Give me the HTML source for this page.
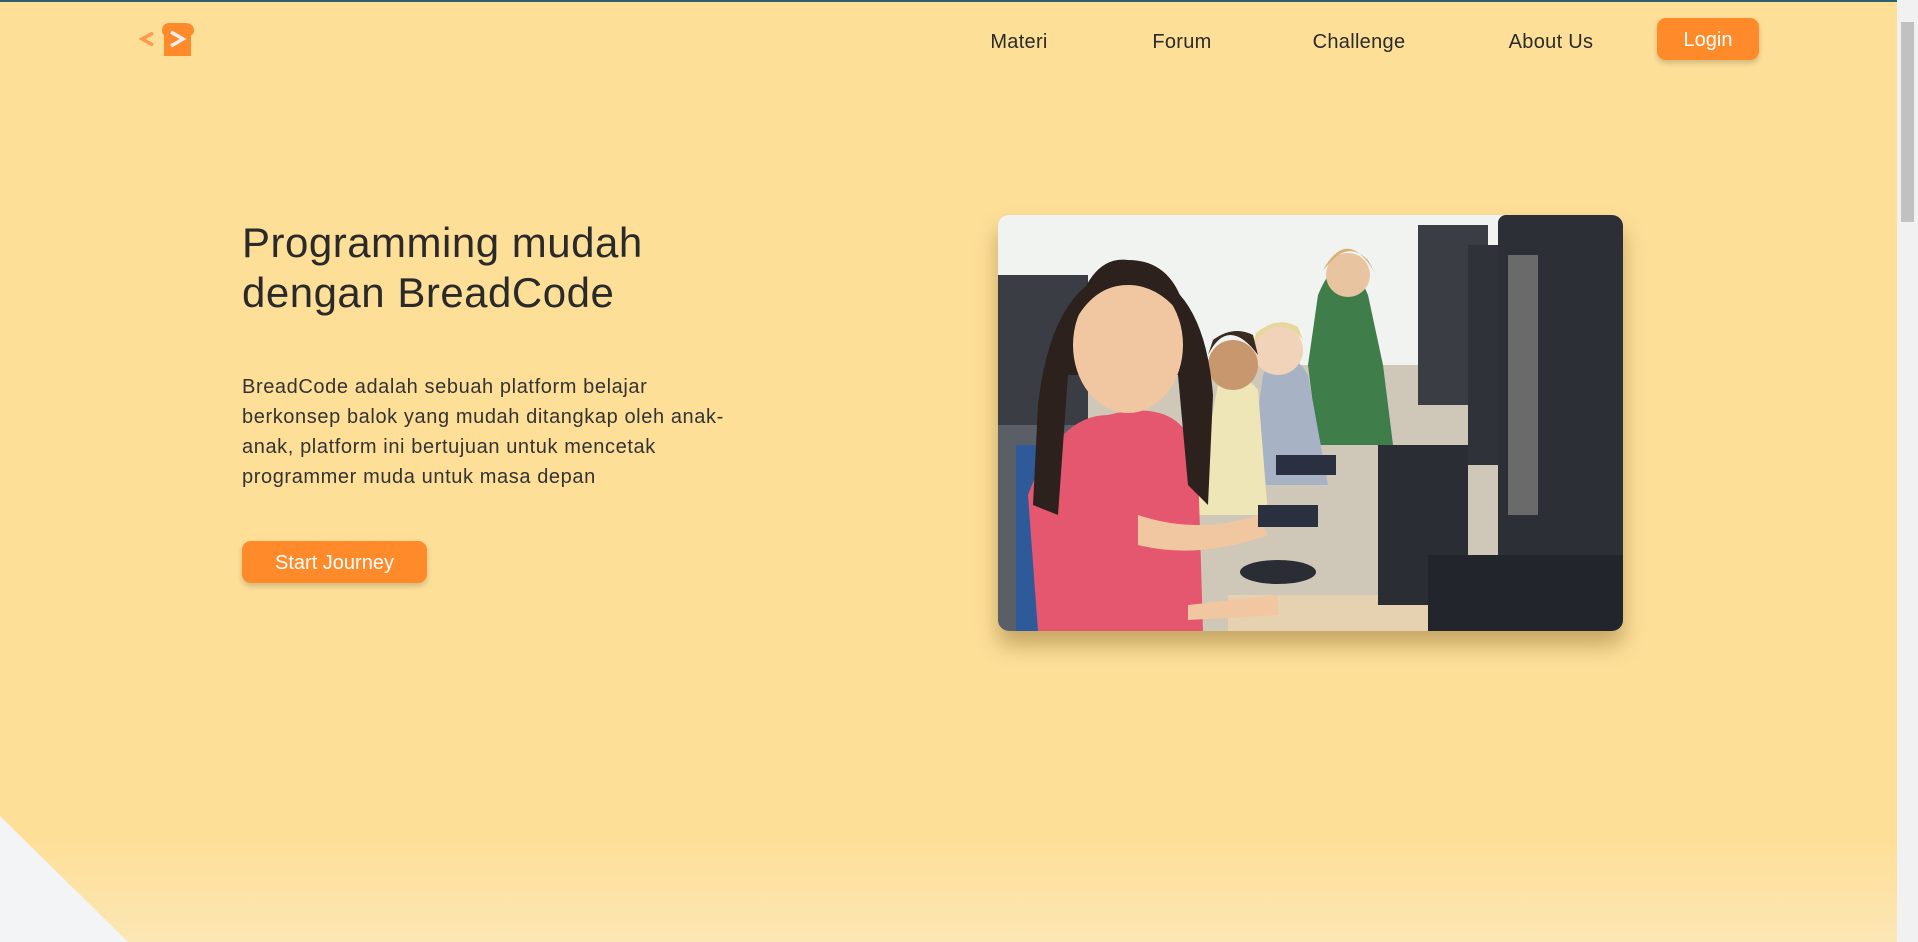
<!DOCTYPE html>
<html><head><meta charset="utf-8"><style>
*{margin:0;padding:0;box-sizing:border-box}
html,body{width:1918px;height:942px;overflow:hidden}
body{background:#FEDF98;font-family:"Liberation Sans",sans-serif;color:#2b2b2b;position:relative}
.topline{position:absolute;left:0;top:0;width:1897px;height:2px;background:#2f5f6a}
.fade{position:absolute;left:0;top:840px;width:1897px;height:102px;background:linear-gradient(#FEDF98,#FCE6B4)}
.tri{position:absolute;left:0;top:0;width:1897px;height:942px;background:#F3F4F6;clip-path:polygon(0 816px,128px 942px,0 942px)}
.sb{position:absolute;right:0;top:0;width:21px;height:942px;background:#f1f1f1}
.sb .th{position:absolute;left:4px;top:22px;width:13px;height:200px;background:#c1c1c1}
.nav a{position:absolute;top:31px;font-size:20px;color:#2b2b2b;text-decoration:none;transform:translateX(-50%);letter-spacing:.3px}
.login{position:absolute;left:1657px;top:18px;width:102px;height:42px;background:#FF8A2A;border-radius:9px;color:#fff;font-size:20px;text-align:center;line-height:44px;box-shadow:0 3px 6px rgba(0,0,0,.18)}
h1{position:absolute;left:242px;top:218px;font-size:42px;font-weight:normal;line-height:50px;color:#2a2a2a;letter-spacing:.5px}
p{position:absolute;left:242px;top:372px;width:620px;font-size:20px;line-height:30px;color:#333;letter-spacing:.6px;white-space:nowrap}
.btn{position:absolute;left:242px;top:541px;width:185px;height:42px;background:#FF8A2A;border-radius:9px;color:#fff;font-size:20px;text-align:center;line-height:44px;box-shadow:0 3px 6px rgba(0,0,0,.18)}
.img{position:absolute;left:998px;top:215px;width:625px;height:416px;border-radius:11px;overflow:hidden;box-shadow:0 14px 22px rgba(90,60,0,.35)}
</style></head><body>
<div class="topline"></div>
<div class="fade"></div>
<div class="tri"></div>
<svg style="position:absolute;left:138px;top:20px" width="60" height="38" viewBox="0 0 60 38">
<path d="M15 13 L4 19 L15 25" fill="none" stroke="#FF9A4A" stroke-width="3.5"/>
<path d="M24 11 Q24 3 32 3 L47 3 Q56 3 56 11 Q56 14 53 15 L53 36 L26 36 L26 15 Q24 14 24 11Z" fill="#FF8A2A"/>
<path d="M33 12 L45 19 L33 26" fill="none" stroke="#eee" stroke-width="3.5"/>
</svg>
<div class="nav"><a style="left:1019px">Materi</a><a style="left:1182px">Forum</a><a style="left:1359px">Challenge</a><a style="left:1551px">About Us</a></div>
<div class="login">Login</div>
<h1>Programming mudah<br>dengan BreadCode</h1>
<p>BreadCode adalah sebuah platform belajar<br>berkonsep balok yang mudah ditangkap oleh anak-<br>anak, platform ini bertujuan untuk mencetak<br>programmer muda untuk masa depan</p>
<div class="btn">Start Journey</div>
<div class="img"><svg width="625" height="416" viewBox="0 0 625 416">
<rect width="625" height="416" fill="#e9ece8"/>
<rect x="0" y="0" width="625" height="150" fill="#f1f3f1"/>
<rect x="0" y="150" width="625" height="266" fill="#cfc7b8"/>
<rect x="0" y="60" width="90" height="150" fill="#3a3d44"/>
<rect x="0" y="210" width="90" height="206" fill="#5a5e66"/>
<rect x="18" y="230" width="35" height="186" fill="#2f5a9a"/>
<rect x="230" y="380" width="200" height="36" fill="#e6d2b0"/>
<path d="M320 80 Q345 20 370 80 L385 150 L395 230 L320 230 L310 150Z" fill="#3f7d4a"/>
<circle cx="350" cy="60" r="22" fill="#e8c4a0"/>
<path d="M325 55 Q350 10 378 60 L370 45 Q350 25 330 50Z" fill="#d8b27a"/>
<path d="M265 160 Q285 120 310 160 L330 270 L250 270Z" fill="#a7b3c5"/>
<circle cx="280" cy="135" r="25" fill="#f0d3b8"/>
<path d="M255 130 Q280 95 305 125 L300 112 Q280 100 258 118Z" fill="#e8d79a"/>
<path d="M220 170 Q240 150 260 175 L270 300 L195 300Z" fill="#efe6b8"/>
<circle cx="235" cy="150" r="25" fill="#c9976e"/>
<path d="M210 140 Q230 100 260 140 L255 120 Q235 110 215 125Z" fill="#3a2b22"/>
<path d="M30 280 Q60 200 110 200 Q190 180 200 250 L205 416 L40 416Z" fill="#e5576f"/>
<path d="M40 190 Q55 60 130 55 Q205 60 215 180 L210 290 L190 270 L180 160 L70 160 L60 300 L35 290Z" fill="#2c211c"/>
<ellipse cx="130" cy="130" rx="55" ry="68" fill="#f0c7a0"/>
<path d="M75 110 Q90 40 130 45 Q180 45 190 110 Q165 70 130 70 Q95 70 75 110Z" fill="#2c211c"/>
<path d="M140 300 Q200 320 260 300 L270 320 Q200 345 140 330Z" fill="#f0c7a0"/>
<path d="M190 390 L280 380 L280 400 L190 405Z" fill="#f0c7a0"/>
<rect x="260" y="290" width="60" height="22" fill="#2a3040"/>
<rect x="278" y="240" width="60" height="20" fill="#2a3040"/>
<ellipse cx="280" cy="357" rx="38" ry="12" fill="#2a2d33"/>
<rect x="420" y="10" width="70" height="180" fill="#3a3d44"/>
<rect x="470" y="30" width="50" height="220" fill="#2f3238"/>
<rect x="500" y="0" width="125" height="390" rx="8" fill="#2c2f36"/>
<rect x="510" y="40" width="30" height="260" fill="#6a6a6a"/>
<rect x="380" y="230" width="90" height="160" fill="#2a2d33"/>
<rect x="430" y="340" width="195" height="76" fill="#22252b"/>
</svg></div>
<div class="sb"><div class="th"></div></div>
</body></html>
